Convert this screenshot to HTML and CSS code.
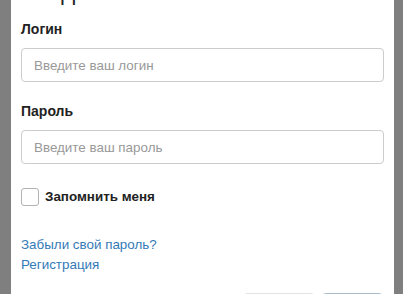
FILE: index.html
```html
<!DOCTYPE html>
<html lang="ru">
<head>
    <meta charset="UTF-8">
    <meta name="viewport" content="width=device-width, initial-scale=1.0">
    <title>Вход</title>
    <link rel="stylesheet" href="styles.css">
</head>
<body>
    <!-- login dialog -->
    <div class="modal">
        <div class="modal-header">
            <h4 class="title">Вход</h4>
        </div>
        <div class="modal-body">
            <form>
                <div class="group">
                    <label for="login">Логин</label>
                    <input type="text" id="login" class="formItem" placeholder="Введите ваш логин">
                </div>
                <div class="group">
                    <label for="password">Пароль</label>
                    <input type="password" id="password" class="formItem" placeholder="Введите ваш пароль">
                </div>
                <div class="remember">
                    <input type="checkbox" id="remember" class="check">
                    <label for="remember">Запомнить меня</label>
                </div>
                <div class="links">
                    <a href="#">Забыли свой пароль?</a>
                    <a href="#">Регистрация</a>
                </div>
            </form>
        </div>
        <div class="modal-footer">
            <button type="button" class="btn">Отмена</button>
            <button type="button" class="btn primary">Войти</button>
        </div>
    </div>
</body>
</html>
```

FILE: styles.css
```css
body {
    margin: 0;
    padding-left: 11px;
    background-color: #7f7f7f;
    font-family: "Liberation Sans", Arial, sans-serif;
    font-size: 13.3px;
    color: #222;
    height: 294px;
    overflow: hidden;
}

/* Dialog box */
.modal {
    width: 383px;
    margin-top: -21px;
    background-color: #fff;
}

.modal-header {
    padding: 0 10px 14px;
}

.title {
    margin: 0;
    font-size: 24px;
    line-height: 26px;
    font-weight: normal;
}

.modal-body {
    padding: 0 10px;
}

form {
    display: flex;
    flex-direction: column;
}

.group {
    display: flex;
    flex-direction: column;
    margin-bottom: 19px;
}

.group label {
    font-size: 14px;
    font-weight: bold;
    line-height: 20px;
    margin-bottom: 9px;
}

.formItem {
    box-sizing: border-box;
    width: 100%;
    height: 34px;
    padding: 6px 12px;
    border: 1px solid #ccc;
    border-radius: 4px;
    font-family: inherit;
    font-size: 13.4px;
    color: #222;
}

.formItem::placeholder {
    color: #999;
}

.remember {
    display: flex;
    align-items: center;
    gap: 6px;
    margin-top: 4px;
    line-height: 20px;
    font-size: 13.4px;
    font-weight: bold;
}

.check {
    appearance: none;
    margin: 0;
    width: 18px;
    height: 18px;
    border: 1px solid #b3b3b3;
    border-radius: 3px;
    background-color: #fff;
}

.links {
    display: flex;
    flex-direction: column;
    margin-top: 28px;
    line-height: 20px;
    font-size: 13.4px;
}

.links a {
    color: #337ab7;
    text-decoration: none;
}

.modal-footer {
    display: flex;
    justify-content: flex-end;
    gap: 7px;
    padding: 18px 11px 15px;
}

.btn {
    padding: 6px 11px;
    border: 1px solid #e3e3e3;
    border-radius: 4px;
    background-color: #fff;
    font-family: inherit;
    font-size: 13.3px;
    line-height: 20px;
    color: #333;
}

.btn.primary {
    border-color: #a9bccb;
    background-color: #a9bccb;
    color: #fff;
}
```
